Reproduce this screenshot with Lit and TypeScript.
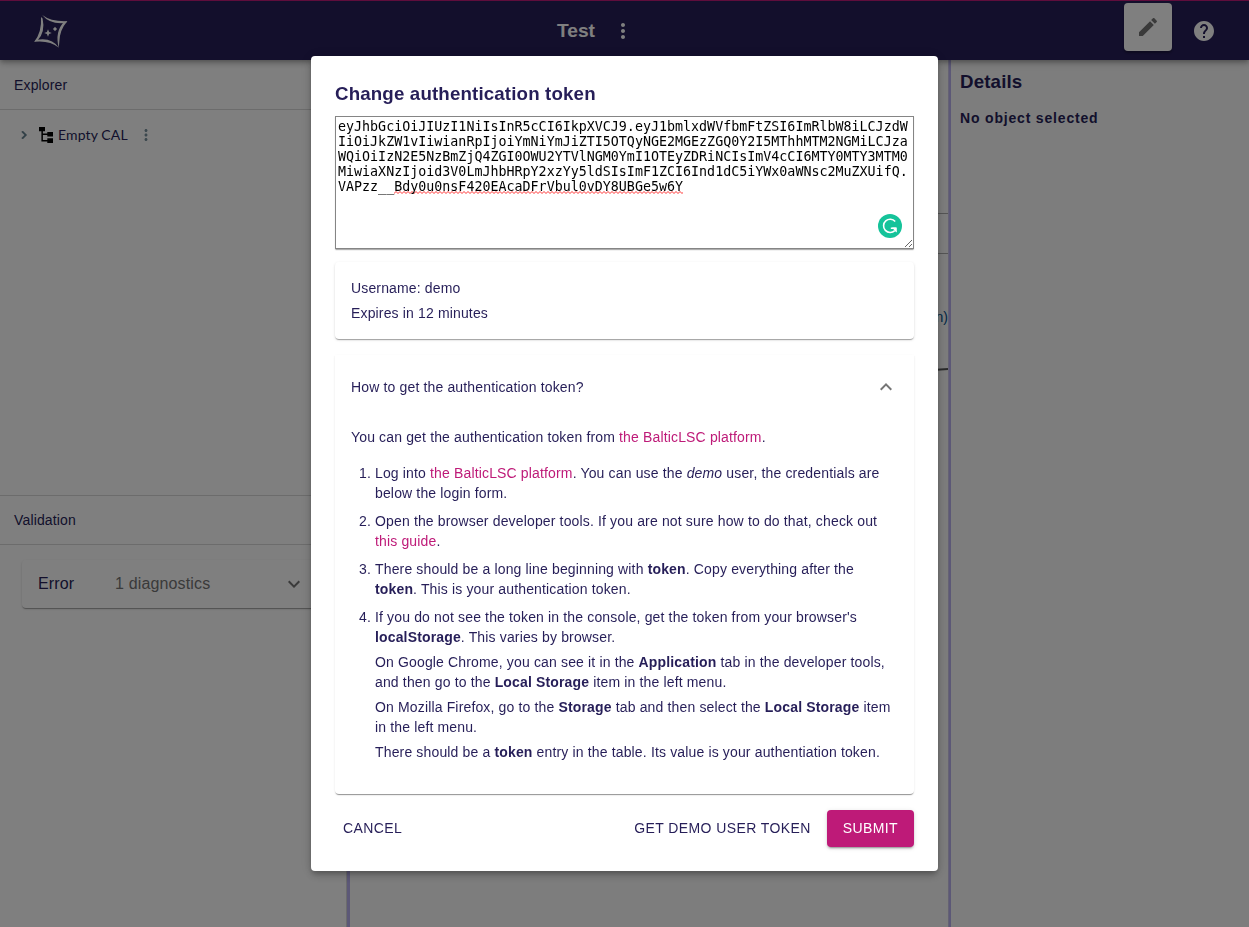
import { LitElement, html, css, svg } from "lit";
import { customElement } from "lit/decorators.js";

const TOKEN_HEAD =
  "eyJhbGciOiJIUzI1NiIsInR5cCI6IkpXVCJ9.eyJ1bmlxdWVfbmFtZSI6ImRlbW8iLCJzdWIiOiJkZW1vIiwianRpIjoiYmNiYmJiZTI5OTQyNGE2MGEzZGQ0Y2I5MThhMTM2NGMiLCJzaWQiOiIzN2E5NzBmZjQ4ZGI0OWU2YTVlNGM0YmI1OTEyZDRiNCIsImV4cCI6MTY0MTY3MTM0MiwiaXNzIjoid3V0LmJhbHRpY2xzYy5ldSIsImF1ZCI6Ind1dC5iYWx0aWNsc2MuZXUifQ.VAPzz__";
const TOKEN_TAIL = "Bdy0u0nsF420EAcaDFrVbul0vDY8UBGe5w6Y";

const icon = (d: string, cls: string) =>
  html`<svg class=${cls} viewBox="0 0 24 24">${svg`<path d=${d} fill="currentColor"></path>`}</svg>`;

const MORE =
  "M12 8c1.1 0 2-.9 2-2s-.9-2-2-2-2 .9-2 2 .9 2 2 2zm0 2c-1.1 0-2 .9-2 2s.9 2 2 2 2-.9 2-2-.9-2-2-2zm0 6c-1.1 0-2 .9-2 2s.9 2 2 2 2-.9 2-2-.9-2-2-2z";
const EDIT =
  "M3 17.25V21h3.75L17.81 9.94l-3.75-3.75L3 17.25zM20.71 7.04c.39-.39.39-1.02 0-1.41l-2.34-2.34c-.39-.39-1.02-.39-1.41 0l-1.83 1.83 3.75 3.75 1.83-1.83z";
const HELP =
  "M12 2C6.48 2 2 6.48 2 12s4.48 10 10 10 10-4.48 10-10S17.52 2 12 2zm1 17h-2v-2h2v2zm2.07-7.75l-.9.92C13.45 12.9 13 13.5 13 15h-2v-.5c0-1.1.45-2.1 1.17-2.83l1.24-1.26c.37-.36.59-.86.59-1.41 0-1.1-.9-2-2-2s-2 .9-2 2H8c0-2.21 1.79-4 4-4s4 1.79 4 4c0 .88-.36 1.68-.93 2.25z";
const RIGHT = "M10 6L8.59 7.41 13.17 12l-4.58 4.59L10 18l6-6z";
const DOWN = "M16.59 8.59L12 13.17 7.41 8.59 6 10l6 6 6-6z";
const UP = "M12 8l-6 6 1.41 1.41L12 10.83l4.59 4.58L18 14z";

@customElement("app-header")
class AppHeader extends LitElement {
  static styles = css`
    :host {
      box-sizing: border-box;
      display: grid;
      grid-template-columns: 1fr auto 1fr;
      height: 60px;
      flex: none;
      align-items: center;
      background: #261e58;
      border-top: 1px solid #be1a78;
      color: #fff;
      position: relative;
      z-index: 1;
      box-shadow: 0 2px 4px -1px rgba(0, 0, 0, 0.2), 0 4px 5px 0 rgba(0, 0, 0, 0.14),
        0 1px 10px 0 rgba(0, 0, 0, 0.12);
    }
    .logo {
      width: 36px;
      height: 34px;
      margin-left: 33px;
      display: block;
    }
    .middle {
      display: flex;
      align-items: center;
      gap: 16px;
      font-weight: 700;
      font-size: 19.2px;
      padding-right: 57px;
    }
    .icon {
      width: 24px;
      height: 24px;
      display: block;
    }
    .right {
      display: flex;
      justify-content: flex-end;
      align-items: center;
      gap: 20px;
      padding-right: 33px;
    }
    .edit {
      display: flex;
      align-items: center;
      justify-content: center;
      width: 48px;
      height: 48px;
      margin-bottom: 7px;
      border-radius: 4px;
      background: #fff;
      color: #757575;
      box-shadow: 0 2px 2px rgba(0, 0, 0, 0.3);
    }
  `;
  render() {
    return html`
      <svg class="logo" viewBox="33 13 36 34" fill="#fff">
        <path d="M42.200 14Q51 20.800 67.300 20.200L66 21.800Q50 23.800 42.200 14z" />
        <path d="M67.300 20.200Q59.500 29 59.300 41L58.800 46.800Q54.500 31 64 20.800z" />
        <path d="M58.800 46.800Q49.500 39 34.200 40.800L36.500 38.800Q52 36 58.800 46.800z" />
        <path d="M34.200 40.800Q42 31 41 16L42.600 17.500Q45.600 31 37.500 39.500z" />
        <path
          d="M48 28.200L49.100 30.900 51.800 32 49.100 33.100 48 35.800 46.900 33.100 44.200 32 46.900 30.900z"
        />
        <path d="M55 25.800L56 27 57.200 28 56 29 55 30.200 54 29 52.800 28 54 27z" />
      </svg>
      <div class="middle"><span>Test</span>${icon(MORE, "icon")}</div>
      <div class="right">
        <div class="edit">${icon(EDIT, "icon")}</div>
        ${icon(HELP, "icon")}
      </div>
    `;
  }
}

@customElement("side-panels")
class SidePanels extends LitElement {
  static styles = css`
    :host {
      display: flex;
      flex-direction: column;
      width: 346px;
      flex: none;
      background: #fff;
      font-size: 14px;
    }
    .head {
      box-sizing: border-box;
      height: 50px;
      flex: none;
      display: flex;
      align-items: center;
      padding-left: 14px;
      letter-spacing: 0.15px;
      border-bottom: 1px solid #d9d9d9;
    }
    .validation {
      border-top: 1px solid #d9d9d9;
    }
    .tree {
      height: 385px;
      flex: none;
    }
    .node {
      display: flex;
      align-items: center;
      height: 24px;
      margin-top: 13px;
      padding-left: 16px;
      font: 14px Lato, sans-serif;
      letter-spacing: 0.12px;
    }
    .name {
      padding-bottom: 2px;
    }
    .arrow {
      width: 16px;
      height: 16px;
      color: #607d8b;
      stroke: #607d8b;
    }
    .kind {
      width: 18px;
      height: 20px;
      margin: 0 3px 0 5px;
    }
    .dots {
      width: 18px;
      height: 18px;
      margin-left: 9px;
      color: #78909c;
    }
    .card {
      box-sizing: border-box;
      display: flex;
      align-items: center;
      height: 48px;
      margin: 15px 16px 0 22px;
      padding-left: 16px;
      font-size: 16px;
      letter-spacing: 0.15px;
      border-radius: 4px;
      box-shadow: 0 2px 1px -1px rgba(0, 0, 0, 0.2), 0 1px 1px 0 rgba(0, 0, 0, 0.14),
        0 1px 3px 0 rgba(0, 0, 0, 0.12);
    }
    .severity {
      width: 77px;
    }
    .count {
      width: 167px;
      color: #757575;
    }
    .chevron {
      width: 24px;
      height: 24px;
      color: #757575;
    }
  `;
  render() {
    return html`
      <div class="head">Explorer</div>
      <div class="tree">
        <div class="node">
          ${icon(RIGHT, "arrow")}
          <svg class="kind" viewBox="0 0 18 20">
            <path
              d="M2 2h6v4.300H5.900V8.500H10.300V7H16v4.400h-5.700V10H5.900v5H10.300V13.300H16V18h-5.700v-1.500H4.400V6.300H2z"
            />
          </svg>
          <span class="name">Empty CAL</span>${icon(MORE, "dots")}
        </div>
      </div>
      <div class="head validation">Validation</div>
      <div class="card">
        <span class="severity">Error</span><span class="count">1 diagnostics</span>${icon(DOWN, "chevron")}
      </div>
    `;
  }
}

@customElement("diagram-canvas")
class DiagramCanvas extends LitElement {
  static styles = css`
    :host {
      flex: 1;
      position: relative;
      overflow: hidden;
      background: #fafafa;
    }
    .shape {
      position: absolute;
      right: -40px;
      top: 153px;
      width: 200px;
      height: 39px;
      border: 1px solid #aaa;
      border-width: 1px 0;
    }
    .label {
      position: absolute;
      right: 0;
      top: 249px;
      font-size: 14px;
      color: #00508c;
    }
    .edge {
      position: absolute;
      right: 0;
      top: 305px;
      width: 60px;
      height: 10px;
    }
  `;
  render() {
    return html`
      <div class="shape"></div>
      <div class="label">n)</div>
      <svg class="edge" viewBox="0 0 60 10"><path d="M0 8L60 4" stroke="#555" stroke-width="1.8" /></svg>
    `;
  }
}

@customElement("token-dialog")
class TokenDialog extends LitElement {
  static styles = css`
    :host {
      box-sizing: border-box;
      display: block;
      width: 627px;
      padding: 24px;
      background: #fff;
      border-radius: 4px;
      font-size: 14px;
      line-height: 20px;
      letter-spacing: 0.15px;
      box-shadow: 0 3px 5px -1px rgba(0, 0, 0, 0.2), 0 5px 8px 0 rgba(0, 0, 0, 0.14),
        0 1px 14px 0 rgba(0, 0, 0, 0.12);
    }
    h2 {
      margin: 0 0 8px;
      font-size: 18.72px;
      line-height: 28px;
      letter-spacing: 0.15px;
    }
    p {
      margin: 0 0 5px;
    }
    a {
      color: #be1a78;
    }
    .paper {
      border-radius: 4px;
      box-shadow: 0 2px 1px -1px rgba(0, 0, 0, 0.2), 0 1px 1px 0 rgba(0, 0, 0, 0.14),
        0 1px 3px 0 rgba(0, 0, 0, 0.12);
    }
    .field {
      position: relative;
      margin-bottom: 13px;
    }
    .token {
      box-sizing: border-box;
      height: 133px;
      padding: 2px;
      border: 1px solid #858585;
      overflow: auto;
      resize: both;
      color: #000;
      font: 13.333px/15px "DejaVu Sans Mono", monospace;
      letter-spacing: 0;
      word-break: break-all;
      box-shadow: 0 2px 1px -1px rgba(0, 0, 0, 0.2), 0 1px 1px 0 rgba(0, 0, 0, 0.14);
    }
    .misspelled {
      background: url("data:image/svg+xml,%3Csvg xmlns='http://www.w3.org/2000/svg' width='4' height='3'%3E%3Cpath d='M-1 1.5L0 2.5 2 .5 4 2.5 5 1.5' fill='none' stroke='red' stroke-width='.8'/%3E%3C/svg%3E")
        repeat-x left bottom;
    }
    .grammar {
      position: absolute;
      right: 12px;
      bottom: 11px;
      width: 24px;
      height: 24px;
    }
    .info {
      padding: 16px;
      margin-bottom: 16px;
    }
    .info p:last-child {
      margin: 0;
    }
    .help {
      margin-bottom: 16px;
      padding: 0 16px 16px;
      height: 423px;
      border-radius: 0 0 4px 4px;
      box-shadow: 0 2px 1px -1px rgba(0, 0, 0, 0.3), 0 1px 1px 0 rgba(0, 0, 0, 0.14),
        0 1px 3px 0 rgba(0, 0, 0, 0.06);
    }
    .summary {
      display: flex;
      align-items: center;
      justify-content: space-between;
      height: 64px;
      margin-bottom: 8px;
    }
    .chevron {
      width: 24px;
      height: 24px;
      color: #757575;
    }
    ol {
      margin: 16px 0 0;
      padding-left: 24px;
    }
    li {
      margin-bottom: 8px;
    }
    .actions {
      display: flex;
      align-items: center;
    }
    .button {
      padding: 6px 8px;
      line-height: 24.5px;
      letter-spacing: 0.4px;
    }
    .spacer {
      flex: 1;
    }
    .submit {
      margin-left: 8px;
      padding: 6px 16px;
      border-radius: 4px;
      color: #fff;
      background: #be1a78;
      box-shadow: 0 3px 1px -2px rgba(0, 0, 0, 0.2), 0 2px 2px 0 rgba(0, 0, 0, 0.14),
        0 1px 5px 0 rgba(0, 0, 0, 0.12);
    }
  `;
  render() {
    return html`
      <h2>Change authentication token</h2>
      <div class="field">
        <div class="token">${TOKEN_HEAD}<span class="misspelled">${TOKEN_TAIL}</span></div>
        <svg class="grammar" viewBox="0 0 24 24">
          <circle cx="12" cy="12" r="12" fill="#15c39a" />
          <path
            d="M17.200 7.600A6.600 6.600 0 1 0 16.800 16.600M12.800 14.300H18"
            fill="none"
            stroke="#fff"
            stroke-width="1.600"
          />
          <path d="M14 13.500H18.800V18.500L17.300 17.200z" fill="#fff" />
        </svg>
      </div>
      <div class="paper info">
        <p>Username: demo</p>
        <p>Expires in 12 minutes</p>
      </div>
      <div class="paper help">
        <div class="summary"><span>How to get the authentication token?</span>${icon(UP, "chevron")}</div>
        <div>You can get the authentication token from <a>the BalticLSC platform</a>.</div>
        <ol>
          <li>
            Log into <a>the BalticLSC platform</a>. You can use the <em>demo</em> user, the credentials are below
            the login form.
          </li>
          <li>
            Open the browser developer tools. If you are not sure how to do that, check out <a>this guide</a>.
          </li>
          <li>
            There should be a long line beginning with <b>token</b>. Copy everything after the <b>token</b>. This is
            your authentication token.
          </li>
          <li>
            <p>
              If you do not see the token in the console, get the token from your browser's <b>localStorage</b>. This
              varies by browser.
            </p>
            <p>
              On Google Chrome, you can see it in the <b>Application</b> tab in the developer tools, and then go to
              the <b>Local Storage</b> item in the left menu.
            </p>
            <p>
              On Mozilla Firefox, go to the <b>Storage</b> tab and then select the <b>Local Storage</b> item in the
              left menu.
            </p>
            <p>There should be a <b>token</b> entry in the table. Its value is your authentiation token.</p>
          </li>
        </ol>
      </div>
      <div class="actions">
        <div class="button">CANCEL</div>
        <div class="spacer"></div>
        <div class="button">GET DEMO USER TOKEN</div>
        <div class="button submit">SUBMIT</div>
      </div>
    `;
  }
}

@customElement("app-root")
class AppRoot extends LitElement {
  static styles = css`
    :host {
      display: flex;
      flex-direction: column;
      height: 927px;
      overflow: hidden;
      color: #261e58;
      font-family: "Liberation Sans", Arial, sans-serif;
    }
    .workbench {
      flex: 1;
      display: flex;
      min-height: 0;
    }
    .splitter {
      box-sizing: border-box;
      width: 4px;
      flex: none;
      background: #b8b0ee;
      border-left: 1px solid #d8d8d8;
    }
    .splitter.thin {
      width: 3px;
      border-left-color: #cbc5e8;
    }
    .details {
      box-sizing: border-box;
      width: 298px;
      flex: none;
      padding: 8px 9px;
      background: #fafafa;
    }
    .title {
      font-size: 18.72px;
      line-height: 28px;
      letter-spacing: 0.15px;
      font-weight: 700;
    }
    .empty {
      margin-top: 12px;
      font-size: 14px;
      line-height: 20px;
      letter-spacing: 0.82px;
      font-weight: 700;
    }
    .backdrop {
      position: fixed;
      inset: 0;
      z-index: 2;
      display: flex;
      align-items: center;
      justify-content: center;
      background: rgba(0, 0, 0, 0.5);
    }
  `;
  render() {
    return html`
      <app-header></app-header>
      <div class="workbench">
        <side-panels></side-panels>
        <div class="splitter"></div>
        <diagram-canvas></diagram-canvas>
        <div class="splitter thin"></div>
        <div class="details">
          <div class="title">Details</div>
          <div class="empty">No object selected</div>
        </div>
      </div>
      <div class="backdrop"><token-dialog></token-dialog></div>
    `;
  }
}
